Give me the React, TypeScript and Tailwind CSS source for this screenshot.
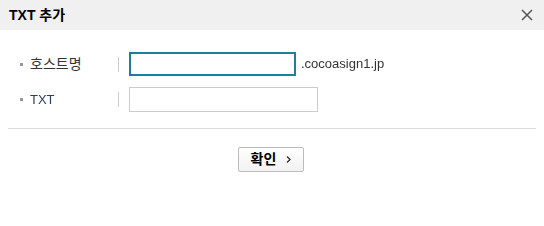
export default function App() {
  return (
    <div
      className="w-[544px] h-[226px] bg-white text-[13px] text-[#333]"
      style={{ fontFamily: '"Liberation Sans", "Noto Sans CJK KR", sans-serif' }}
    >
      <div className="flex h-[30px] items-center justify-between bg-[#f0f0f0] pl-[9px] pr-[7px]">
        <h1 className="text-[14px] font-bold text-black">TXT 추가</h1>
        <button className="flex h-5 w-5 items-center justify-center text-[#555]">
          <svg width="12" height="12" viewBox="0 0 12 12" fill="none" stroke="currentColor" strokeWidth="1.5">
            <path d="M1 1l10 10M11 1L1 11" />
          </svg>
        </button>
      </div>

      <div className="mx-2 border-b border-[#ddd] pb-[16px] pt-[22px]">
        <div className="flex h-[24px] items-center">
          <span className="ml-[12px] h-[3px] w-[3px] bg-[#999]" />
          <span className="ml-[7px] w-[88px] text-[14px]">호스트명</span>
          <span className="h-[15px] w-px bg-[#ccc]" />
          <input
            autoFocus
            className="ml-[10px] h-[24px] w-[167px] border-2 border-[#1a7fa0] px-1 outline-none"
          />
          <span className="ml-[5px]">.cocoasign1.jp</span>
        </div>
        <div className="mt-[11px] flex h-[25px] items-center">
          <span className="ml-[12px] h-[3px] w-[3px] bg-[#999]" />
          <span className="ml-[7px] w-[88px] text-[#2c3e63]">TXT</span>
          <span className="h-[15px] w-px bg-[#ccc]" />
          <input className="ml-[10px] h-[25px] w-[189px] border border-[#ccc] px-1 outline-none" />
        </div>
      </div>

      <div className="flex justify-center pt-[18px]">
        <button className="ml-[-2px] flex h-[25px] w-[66px] items-center justify-center gap-[10px] rounded-[2px] border border-[#bbb] bg-gradient-to-b from-white to-[#f2f2f2] text-[14px] font-bold text-black">
          <span>확인</span>
          <svg width="5" height="7" viewBox="0 0 5 7" fill="none" stroke="#333" strokeWidth="1.4">
            <path d="M1 0.5l3 3-3 3" />
          </svg>
        </button>
      </div>
    </div>
  );
}
